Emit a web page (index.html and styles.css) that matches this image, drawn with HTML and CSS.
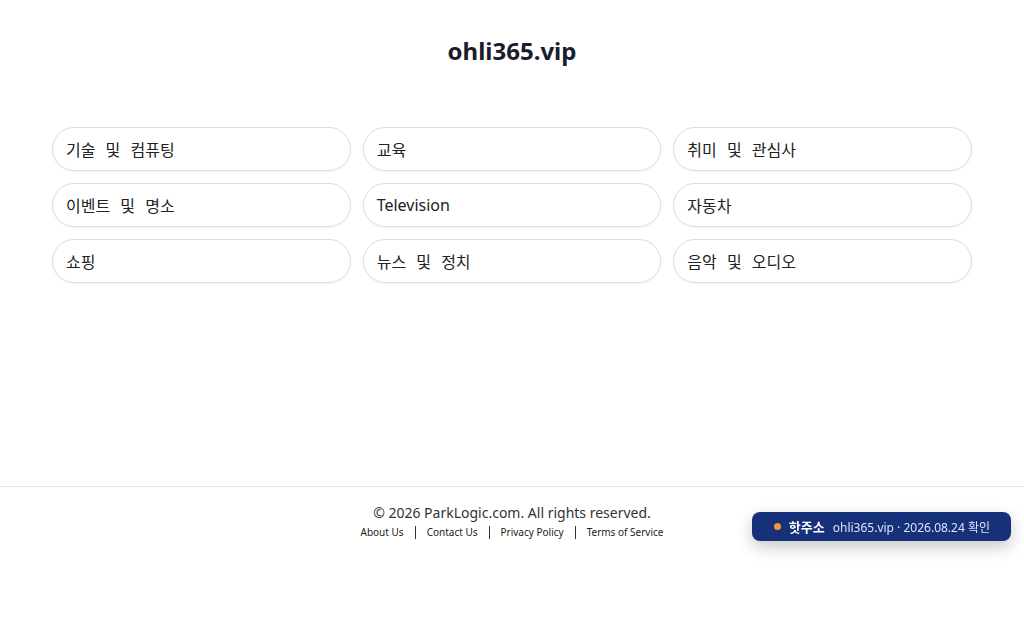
FILE: index.html
```html
<!DOCTYPE html>
<html lang="ko">
<head>
    <meta charset="UTF-8">
    <meta name="viewport" content="width=device-width, initial-scale=1.0">
    <title>ohli365.vip</title>
    <link rel="stylesheet" href="styles.css">
</head>
<body>
    <div class="page">
        <header class="top">
            <h1 class="site-title">ohli365.vip</h1>
        </header>
        <main class="main">
            <!-- 카테고리 목록 -->
            <ul class="cats">
                <li><a href="#">기술 및 컴퓨팅</a></li>
                <li><a href="#">교육</a></li>
                <li><a href="#">취미 및 관심사</a></li>
                <li><a href="#">이벤트 및 명소</a></li>
                <li><a href="#">Television</a></li>
                <li><a href="#">자동차</a></li>
                <li><a href="#">쇼핑</a></li>
                <li><a href="#">뉴스 및 정치</a></li>
                <li><a href="#">음악 및 오디오</a></li>
            </ul>
        </main>
        <footer class="foot">
            <p class="copy">© 2026 ParkLogic.com. All rights reserved.</p>
            <nav class="foot-links">
                <a href="#">About Us</a>
                <span class="sep"></span>
                <a href="#">Contact Us</a>
                <span class="sep"></span>
                <a href="#">Privacy Policy</a>
                <span class="sep"></span>
                <a href="#">Terms of Service</a>
            </nav>
        </footer>
    </div>
    <div class="hot">
        <span class="dot"></span>
        <b class="hot-label">핫주소</b>
        <span class="hot-text">ohli365.vip · 2026.08.24 확인</span>
    </div>
</body>
</html>
```

FILE: styles.css
```css
body{
    margin: 0;
    background: #fff;
    color: #222;
    font-family: "Noto Sans", "Noto Sans CJK KR", sans-serif;
}
.top{
    height: 100px;
    display: flex;
    align-items: center;
    justify-content: center;
}
.site-title{
    margin: 0;
    font-size: 24px;
    font-weight: 700;
    color: #1a1d2b;
}
.main{
    min-height: 386px;/*푸터 선 위치 맞추기*/
    padding-top: 27px;
    box-sizing: border-box;
}
.cats{
    list-style: none;
    margin: 0 auto;
    padding: 0;
    max-width: 920px;
    display: grid;
    grid-template-columns: repeat(3, 1fr);
    gap: 12px;
}
.cats a{
    display: flex;
    align-items: center;
    height: 44px;
    box-sizing: border-box;
    padding: 0 13px;
    border: 1px solid #dcdcdc;
    border-radius: 22px;
    color: #222;
    font-size: 16px;
    word-spacing: 6px;
    text-decoration: none;
    box-shadow: 0 1px 2px rgba(0,0,0,0.04);
}
.foot{
    border-top: 1px solid #e3e3e3;
    text-align: center;
    padding-top: 16px;
}
.copy{
    margin: 0;
    font-size: 14px;
    line-height: 20px;
    color: #333;
}
.foot-links{
    display: flex;
    justify-content: center;
    align-items: center;
    gap: 11px;
    height: 18px;
    font-size: 10px;
}
.foot-links a{
    color: #222;
    text-decoration: none;
}
.sep{
    width: 1px;
    height: 13px;
    background: #333;
}
.hot{
    position: fixed;
    right: 13px;
    bottom: 99px;
    height: 29px;
    padding: 0 21px 0 22px;
    display: flex;
    align-items: center;
    gap: 7px;
    background: #16307a;
    border-radius: 8px;
    box-shadow: 0 6px 16px rgba(0,0,0,0.22);
    font-size: 12px;
    color: #dbe3f7;
}
.dot{
    width: 7px;
    height: 7px;
    border-radius: 50%;
    background: #f39440;
    margin-right: 1px;
}
.hot-label{
    color: #fff;
    font-size: 13px;
    margin-right: 1px;
}
```
